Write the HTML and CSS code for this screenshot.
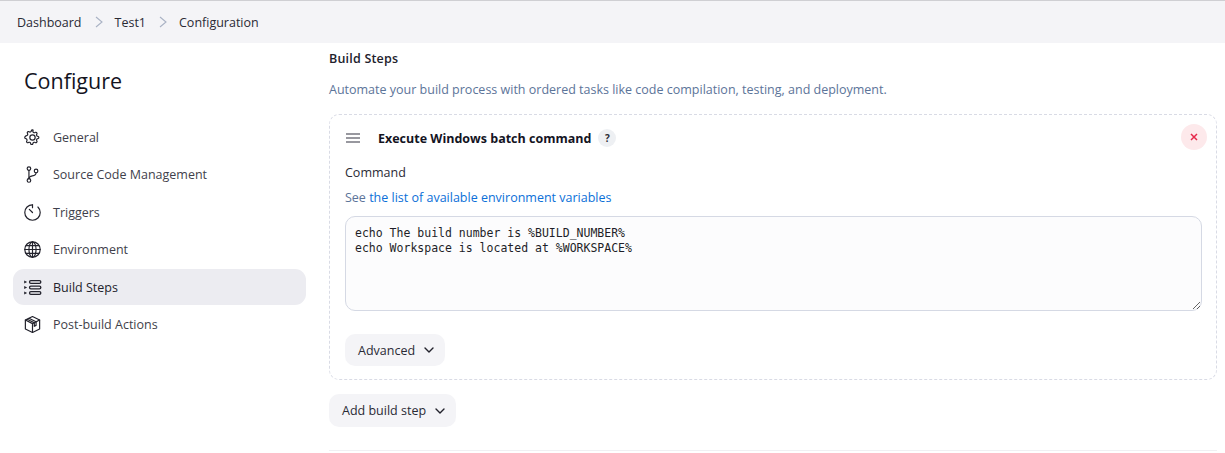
FILE: index.html
```html
<!DOCTYPE html>
<html lang="en">
<head>
<meta charset="utf-8">
<title>Configuration</title>
<link rel="stylesheet" href="styles.css">
</head>
<body>
<nav class="crumbs">
  <a>Dashboard</a>
  <svg class="sep" viewBox="0 0 10 12"><path d="M2 1l6 5-6 5"/></svg>
  <a>Test1</a>
  <svg class="sep" viewBox="0 0 10 12"><path d="M2 1l6 5-6 5"/></svg>
  <a>Configuration</a>
</nav>
<div class="layout">
  <aside class="side">
    <h1 class="title">Configure</h1>
    <ul class="menu">
      <li class="item"><svg class="ico" viewBox="0 0 512 512"><path d="M262.3 48h-12.6c-9 0-17 5.700-19.900 14.200l-8.700 25.300c-2.200 6.400-7.300 11.200-13.600 13.700-3.600 1.500-7.100 3.200-10.500 5-6 3.200-13 3.700-19.300 1.200l-24.100-10.700c-8.200-3.600-17.800-1.800-24.200 4.600l-8.900 8.900c-6.400 6.400-8.200 16-4.600 24.200l10.700 24.100c2.500 6.300 2 13.300-1.200 19.300-1.800 3.400-3.500 6.900-5 10.500-2.500 6.300-7.300 11.400-13.700 13.600l-25.300 8.700C53.700 233 48 241 48 250v12c0 9 5.700 17 14.200 19.900l25.300 8.700c6.400 2.200 11.200 7.300 13.700 13.600 1.500 3.600 3.200 7.100 5 10.500 3.200 6 3.700 13 1.200 19.300l-10.700 24.100c-3.600 8.200-1.800 17.800 4.600 24.200l8.900 8.900c6.400 6.400 16 8.200 24.200 4.600l24.100-10.700c6.300-2.500 13.300-2 19.300 1.200 3.400 1.800 6.900 3.500 10.500 5 6.300 2.500 11.400 7.300 13.600 13.700l8.700 25.300c2.900 8.500 10.900 14.200 19.900 14.200h12.600c9 0 17-5.700 19.900-14.200l8.700-25.300c2.200-6.400 7.300-11.200 13.600-13.700 3.600-1.500 7.100-3.200 10.500-5 6-3.200 13-3.700 19.300-1.200l24.100 10.700c8.200 3.600 17.800 1.800 24.200-4.600l8.900-8.900c6.400-6.400 8.200-16 4.600-24.200l-10.700-24.100c-2.500-6.300-2-13.300 1.200-19.300 1.800-3.400 3.500-6.900 5-10.500 2.500-6.300 7.300-11.400 13.700-13.600l25.300-8.700c8.500-2.900 14.200-10.900 14.200-19.900v-12c0-9-5.700-17-14.200-19.900l-25.300-8.700c-6.400-2.200-11.200-7.300-13.700-13.600-1.500-3.600-3.200-7.100-5-10.500-3.200-6-3.700-13-1.200-19.300l10.700-24.100c3.600-8.200 1.800-17.800-4.600-24.200l-8.900-8.900c-6.400-6.400-16-8.200-24.200-4.600l-24.100 10.700c-6.300 2.500-13.300 2-19.300-1.200-3.400-1.800-6.900-3.500-10.500-5-6.300-2.500-11.400-7.300-13.600-13.700l-8.700-25.300C279.300 53.700 271.300 48 262.300 48z"/><circle cx="256" cy="256" r="72"/></svg><span>General</span></li>
      <li class="item"><svg class="ico" viewBox="0 0 512 512"><circle cx="160" cy="96" r="48"/><circle cx="160" cy="416" r="48"/><path d="M160 144v224"/><circle cx="352" cy="160" r="48"/><path d="M352 208c0 128-192 48-192 160"/></svg><span>Source Code Management</span></li>
      <li class="item"><svg class="ico" viewBox="0 0 512 512"><path d="M256 48C141 48 48 141 48 256s93 208 208 208 208-93 208-208c0-58-24-110-62-148"/><path d="M256 48v80"/><path d="M170 170l86 86"/></svg><span>Triggers</span></li>
      <li class="item"><svg class="ico" viewBox="0 0 512 512"><circle cx="256" cy="256" r="208"/><ellipse cx="256" cy="256" rx="96" ry="208"/><path d="M256 48v416M48 256h416M84 150h344M84 362h344"/></svg><span>Environment</span></li>
      <li class="item active"><svg class="ico thick" viewBox="0 0 512 512"><rect x="176" y="72" width="304" height="72" rx="36"/><rect x="176" y="220" width="304" height="72" rx="36"/><rect x="176" y="368" width="304" height="72" rx="36"/><path class="fill" d="M32 70l80 38-80 38zM32 218l80 38-80 38zM32 366l80 38-80 38z"/></svg><span>Build Steps</span></li>
      <li class="item"><svg class="ico" viewBox="0 0 512 512"><path d="M256 40L64 136v240l192 96 192-96V136z"/><path d="M64 136l192 96 192-96M256 232v240"/><path d="M160 88l192 96v96l-48 24v-96L112 112"/></svg><span>Post-build Actions</span></li>
    </ul>
  </aside>
  <main class="main">
    <h2 class="heading">Build Steps</h2>
    <p class="desc">Automate your build process with ordered tasks like code compilation, testing, and deployment.</p>
    <section class="card">
      <header class="card-head">
        <svg class="handle" viewBox="0 0 16 12"><path d="M1 2h14M1 6h14M1 10h14"/></svg>
        <strong class="card-title">Execute Windows batch command</strong>
        <span class="help">?</span>
        <button class="close" type="button" aria-label="Delete"><svg viewBox="0 0 10 10"><path d="M2 2l6 6M8 2l-6 6"/></svg></button>
      </header>
      <div class="label">Command</div>
      <div class="hint">See <a>the list of available environment variables</a></div>
      <textarea class="code" spellcheck="false">echo The build number is %BUILD_NUMBER%
echo Workspace is located at %WORKSPACE%</textarea>
      <button class="btn adv" type="button">Advanced<svg class="chev" viewBox="0 0 12 8"><path d="M2 2l4 4 4-4"/></svg></button>
    </section>
    <button class="btn add" type="button">Add build step<svg class="chev" viewBox="0 0 12 8"><path d="M2 2l4 4 4-4"/></svg></button>
    <div class="rule"></div>
  </main>
</div>
</body>
</html>
```
FILE: styles.css
```css
* { box-sizing: border-box; }
html, body { margin: 0; height: 100%; overflow: hidden; }
body {
  background: #fff;
  color: #14141f;
  font-family: "Open Sans", "Noto Sans", "Liberation Sans", sans-serif;
  font-size: 13px;
}
.crumbs {
  height: 43px;
  background: #f4f4f7;
  border-top: 1px solid #cfcfd3;
  display: flex;
  align-items: center;
  padding-left: 17px;
  font-size: 12.5px;
  color: #2a2a35;
}
.sep { width: 10px; height: 12px; margin: 0 11px 0 12px; fill: none; stroke: #a9b2c4; stroke-width: 1.1; }
.layout { display: flex; }
.side { width: 329px; padding: 0 23px 0 13px; flex: none; }
.title {
  margin: 23px 0 23px 11px;
  font-size: 21.5px;
  line-height: 30px;
  font-weight: 400;
}
.menu { list-style: none; margin: 0; padding: 0; display: flex; flex-direction: column; gap: 1.5px; }
.item {
  height: 36px;
  display: flex;
  align-items: center;
  gap: 11px;
  padding-left: 10px;
  border-radius: 11px;
  color: #3f3f4b;
  font-size: 12.5px;
}
.item.active { background: #ececf1; color: #22222c; }
.ico { width: 19px; height: 19px; flex: none; fill: none; stroke: #22222c; stroke-width: 32; stroke-linecap: round; stroke-linejoin: round; }
.ico.thick { stroke-width: 36; }
.ico .fill { fill: #22222c; stroke: none; }
.main { flex: none; width: 888px; padding-top: 7px; }
.heading { margin: 0; font-size: 12.5px; line-height: 18px; font-weight: 600; color: #22222c; letter-spacing: .2px; }
.desc { margin: 13px 0 15px; font-size: 12.5px; line-height: 18px; color: #5c7499; }
.card {
  border: 1px dashed #d9dbe5;
  border-radius: 10px;
  height: 266px;
  padding: 0 15px;
  display: flex;
  flex-direction: column;
  align-items: flex-start;
}
.card-head { display: flex; align-items: center; width: 100%; height: 44px; margin-top: 1px; position: relative; }
.handle { width: 16px; height: 12px; fill: none; stroke: #333340; stroke-width: 1.2; }
.card-title { margin-left: 17px; font-size: 12.5px; font-weight: 700; color: #14141f; }
.help {
  margin-left: 7px;
  width: 18px; height: 18px;
  border-radius: 50%;
  background: #eef0f3;
  font-size: 10px; font-weight: 700;
  display: flex; align-items: center; justify-content: center;
  color: #2a2a35;
}
.close {
  position: absolute; right: -6px; top: 8px;
  width: 26px; height: 26px;
  border: 0; border-radius: 50%; padding: 0;
  background: #fde9eb;
  display: flex; align-items: center; justify-content: center;
}
.close svg { width: 10px; height: 10px; fill: none; stroke: #e6294b; stroke-width: 1.5; }
.label { font-size: 12.5px; line-height: 18px; margin-top: 4px; color: #2a2a35; }
.hint { font-size: 12.5px; line-height: 18px; margin-top: 7px; color: #5c7499; }
.hint a { color: #0b6fd8; }
.code {
  display: block;
  width: 857px;
  height: 95px;
  margin-top: 9px;
  padding: 9px 9px;
  border: 1px solid #d5d9e4;
  border-radius: 10px;
  background: #fcfcfd;
  color: #1e1e28;
  font-family: "DejaVu Sans Mono", monospace;
  font-size: 11.5px;
  line-height: 15px;
  outline: 0;
  resize: vertical;
}
.btn {
  border: 0;
  background: #f4f4f7;
  border-radius: 10px;
  color: #2a2a35;
  font-family: inherit;
  font-size: 12.5px;
  display: inline-flex;
  align-items: center;
  padding: 0;
}
.adv { width: 100px; height: 32px; margin-top: 23px; padding-left: 13px; }
.add { width: 127px; height: 33px; margin-top: 14px; padding-left: 13px; display: flex; }
.chev { width: 12px; height: 8px; margin-left: 8px; fill: none; stroke: #22222c; stroke-width: 1.4; stroke-linecap: round; stroke-linejoin: round; }
.rule { height: 1px; margin-top: 23px; background: #f0f0f3; }
```
